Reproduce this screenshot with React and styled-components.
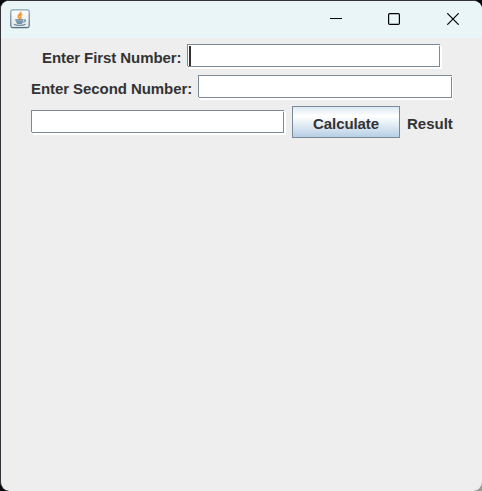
import React from "react";
import styled, { createGlobalStyle } from "styled-components";

const GlobalStyle = createGlobalStyle`
  * { box-sizing: border-box; }
  body { margin: 0; background: #050507; overflow: hidden; }
`;

const Desktop = styled.div`
  width: 482px;
  height: 491px;
  background: linear-gradient(135deg, #08080c 50%, #08080c 72%, #9b9b9b 76%);
`;

const Window = styled.main`
  width: 482px;
  height: 491px;
  border: solid #35333a;
  border-width: 1px 0 0 1px;
  border-radius: 9px;
  overflow: hidden;
  background: #eeeeee;
  font-family: "Liberation Sans", Arial, sans-serif;
`;

const TitleBar = styled.header`
  display: flex;
  align-items: flex-start;
  justify-content: space-between;
  height: 37px;
  padding: 8px 0 0 9px;
  background: #eaf5f8;
`;

const WindowControls = styled.div`
  display: flex;
  margin-top: -8px;
`;

const ControlButton = styled.button`
  display: flex;
  width: 58.5px;
  height: 36px;
  padding: 0;
  border: 0;
  background: none;
  align-items: center;
  justify-content: center;
`;

const Content = styled.section`
  display: flex;
  flex-direction: column;
`;

const Row = styled.div`
  display: flex;
  align-items: flex-start;
  height: ${(p) => p.$height}px;
  padding: ${(p) => p.$top}px 0 0 ${(p) => p.$left}px;
`;

const Label = styled.label`
  flex: none;
  width: ${(p) => p.$width}px;
  margin-top: ${(p) => p.$drop || 0}px;
  font-size: 15px;
  font-weight: 700;
  line-height: 17px;
  letter-spacing: ${(p) => p.$tracking || 0}px;
  white-space: nowrap;
  color: #333333;
`;

const Field = styled.div`
  position: relative;
  flex: none;
  width: ${(p) => p.$width || 253}px;
  height: 23px;
  margin-top: ${(p) => p.$drop || 0}px;
  padding: 1px;
  border: 1px solid #7a8a99;
  background: #ffffff;
  box-shadow: ${(p) => p.$shadow || 2}px 2px 0 #ffffff;

  &::before,
  &::after {
    content: "";
    position: absolute;
    width: 1px;
    height: 1px;
    background: #eeeeee;
  }
  &::before { top: 0; right: -1px; }
  &::after { bottom: -1px; left: -1px; }
`;

const Caret = styled.div`
  width: 2px;
  height: 20px;
  background: #333333;
`;

const CalculateButton = styled.button`
  flex: none;
  width: 108px;
  height: 32px;
  margin: 0 7px 0 8px;
  padding: 3px 0 0;
  border: 1px solid #7a8a99;
  border-radius: 0;
  background: linear-gradient(#dde8f3 0%, #ffffff 30%, #ffffff 32%, #b8cfe5 100%);
  color: #333333;
  font: 700 15px/17px "Liberation Sans", Arial, sans-serif;
  letter-spacing: -0.1px;
`;

const JavaIcon = () => (
  <svg width="20" height="20" viewBox="0 0 20 20" fill="none">
    <defs>
      <linearGradient id="tile" x2="0" y2="1">
        <stop stopColor="#ffffff" />
        <stop offset="1" stopColor="#e3e5e6" />
      </linearGradient>
      <linearGradient id="edge" x2="0" y2="1">
        <stop stopColor="#87a3b3" />
        <stop offset="1" stopColor="#526e80" />
      </linearGradient>
    </defs>
    <rect x=".8" y=".8" width="18.4" height="17.8" rx="1.8" fill="url(#tile)" stroke="url(#edge)" strokeWidth="1.2" />
    <path d="M10.6 2.8c.9 2.2-3.4 2.9-2.4 5 .4.8 1.3 1.3 1.3 2.5M12.3 5.2c-2 .7-2.6 1.7-1.6 2.7.7.7.2 1.6-.2 2.2" stroke="#ec963f" strokeWidth="1.6" />
    <path d="M5.3 10.6h8c-.2 2.2-.9 3.6-2 4H7.5c-1.2-.4-2-1.8-2.2-4Z" fill="#a6b8c6" />
    <path d="M5.3 10.9h7.7M6.2 12.8h6.8M7.1 14.4h5M13.5 10.9c3-.6 2.4 2.2-.6 2.4M3.9 15.2c2.4 1.6 9.1 1.6 11.6 0" stroke="#6e8ca3" strokeWidth="1.15" />
  </svg>
);

export default function App() {
  return (
    <>
      <GlobalStyle />
      <Desktop>
        <Window>
          <TitleBar>
            <JavaIcon />
            <WindowControls>
              <ControlButton aria-label="Minimize">
                <svg width="12" height="12" viewBox="0 0 12 12">
                  <path d="M0 5.5h12" stroke="#000" />
                </svg>
              </ControlButton>
              <ControlButton aria-label="Maximize">
                <svg width="12" height="12" viewBox="0 0 12 12">
                  <rect x=".6" y=".6" width="10.8" height="10.8" rx="1.2" fill="none" stroke="#000" strokeWidth="1.2" />
                </svg>
              </ControlButton>
              <ControlButton aria-label="Close">
                <svg width="12" height="12" viewBox="0 0 12 12">
                  <path d="m.3.3 11.4 11.4M11.7.3.3 11.7" stroke="#000" strokeWidth="1.2" />
                </svg>
              </ControlButton>
            </WindowControls>
          </TitleBar>
          <Content>
            <Row $height={37} $top={6} $left={41}>
              <Label $width={145} $drop={5} $tracking={-0.07}>Enter First Number:</Label>
              <Field><Caret /></Field>
            </Row>
            <Row $height={31} $top={0} $left={30}>
              <Label $width={167} $drop={5} $tracking={-0.07}>Enter Second Number:</Label>
              <Field $width={254} $shadow={1} />
            </Row>
            <Row $height={32} $top={0} $left={30}>
              <Field $drop={4} />
              <CalculateButton>Calculate</CalculateButton>
              <Label as="span" $width={48} $drop={9}>Result</Label>
            </Row>
          </Content>
        </Window>
      </Desktop>
    </>
  );
}
